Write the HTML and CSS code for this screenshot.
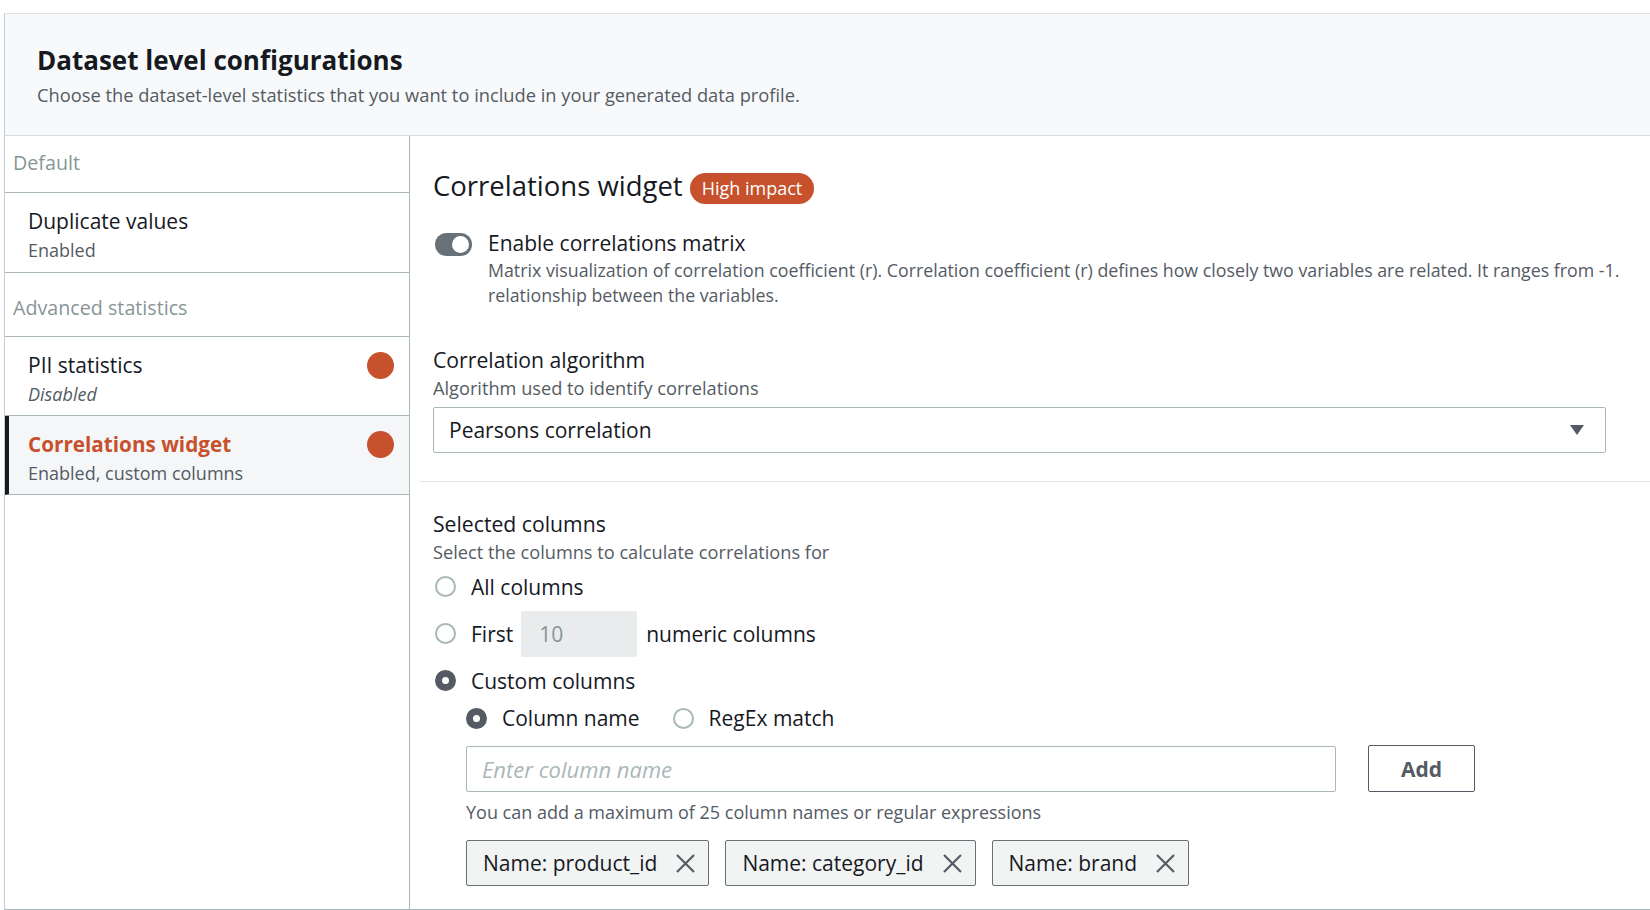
FILE: index.html
```html
<!DOCTYPE html>
<html lang="en">
<head>
<meta charset="utf-8">
<title>Dataset level configurations</title>
<link rel="stylesheet" href="styles.css">
</head>
<body>
<div class="top-strip"></div>
<div class="frame">
  <header class="header">
    <h1 class="title">Dataset level configurations</h1>
    <p class="subtitle">Choose the dataset-level statistics that you want to include in your generated data profile.</p>
  </header>
  <div class="body">
    <nav class="sidebar">
      <div class="section-label section-label--first">Default</div>
      <div class="nav-item">
        <div class="nav-text">
          <div class="nav-title">Duplicate values</div>
          <div class="nav-sub">Enabled</div>
        </div>
      </div>
      <div class="section-label section-label--second">Advanced statistics</div>
      <div class="nav-item">
        <div class="nav-text">
          <div class="nav-title">PII statistics</div>
          <div class="nav-sub nav-sub--italic">Disabled</div>
        </div>
        <span class="dot"></span>
      </div>
      <div class="nav-item nav-item--active">
        <div class="nav-text">
          <div class="nav-title nav-title--active">Correlations widget</div>
          <div class="nav-sub">Enabled, custom columns</div>
        </div>
        <span class="dot"></span>
      </div>
    </nav>
    <main class="panel">
      <div class="panel-heading">
        <h2 class="panel-title">Correlations widget</h2>
        <span class="badge">High impact</span>
      </div>

      <div class="toggle-row">
        <span class="toggle"><span class="toggle-knob"></span></span>
        <div class="toggle-text">
          <div class="toggle-label">Enable correlations matrix</div>
          <div class="toggle-desc">
            <span class="desc-line">Matrix visualization of correlation coefficient (r). Correlation coefficient (r) defines how closely two variables are related. It ranges from -1.</span>
            <span class="desc-line">relationship between the variables.</span>
          </div>
        </div>
      </div>

      <div class="field field--algo">
        <div class="field-label">Correlation algorithm</div>
        <div class="field-help">Algorithm used to identify correlations</div>
        <div class="select">
          <span class="select-value">Pearsons correlation</span>
          <svg class="select-caret" width="16" height="12" viewBox="0 0 16 12"><path d="M1 1h14L8 11z" fill="#545b64"/></svg>
        </div>
      </div>

      <div class="divider"></div>

      <div class="field field--columns">
        <div class="field-label">Selected columns</div>
        <div class="field-help">Select the columns to calculate correlations for</div>
        <div class="radio-group">
          <div class="radio-row">
            <span class="radio"></span>
            <span class="radio-label">All columns</span>
          </div>
          <div class="radio-row">
            <span class="radio"></span>
            <span class="radio-label">First</span>
            <span class="num-input">10</span>
            <span class="radio-label">numeric columns</span>
          </div>
          <div class="radio-row">
            <span class="radio radio--checked"></span>
            <span class="radio-label">Custom columns</span>
          </div>
          <div class="sub-radios">
            <div class="sub-radio">
              <span class="radio radio--checked"></span>
              <span class="radio-label">Column name</span>
            </div>
            <div class="sub-radio">
              <span class="radio"></span>
              <span class="radio-label">RegEx match</span>
            </div>
          </div>
        </div>

        <div class="custom-block">
          <div class="add-row">
            <div class="text-input"><span class="placeholder">Enter column name</span></div>
            <button class="add-btn">Add</button>
          </div>
          <div class="hint">You can add a maximum of 25 column names or regular expressions</div>
          <div class="tokens">
            <span class="token">Name: product_id
              <svg class="token-x" width="21" height="21" viewBox="0 0 21 21"><path d="M2 2l17 17M19 2L2 19" stroke="#545b64" stroke-width="2.2" fill="none"/></svg>
            </span>
            <span class="token">Name: category_id
              <svg class="token-x" width="21" height="21" viewBox="0 0 21 21"><path d="M2 2l17 17M19 2L2 19" stroke="#545b64" stroke-width="2.2" fill="none"/></svg>
            </span>
            <span class="token">Name: brand
              <svg class="token-x" width="21" height="21" viewBox="0 0 21 21"><path d="M2 2l17 17M19 2L2 19" stroke="#545b64" stroke-width="2.2" fill="none"/></svg>
            </span>
          </div>
        </div>
      </div>
    </main>
  </div>
</div>
</body>
</html>
```
FILE: styles.css
```css
* { box-sizing: border-box; }

html, body {
  margin: 0;
  padding: 0;
  height: 910px;
  overflow: hidden;
  background: #ffffff;
  font-family: "Open Sans", "Noto Sans", sans-serif;
  color: #16191f;
}

.top-strip {
  height: 13px;
}

.frame {
  margin-left: 4px;
  height: 897px;
  border-top: 1px solid #dde2e6;
  border-left: 1px solid #c6ccd1;
  border-bottom: 1px solid #aab7b8;
  display: flex;
  flex-direction: column;
}

.header {
  height: 122px;
  flex: none;
  background: #f8f9fa;
  border-bottom: 1px solid #d5dbdb;
  padding: 30px 0 0 32px;
}

.title {
  margin: 0;
  font-size: 26px;
  line-height: 32px;
  font-weight: 700;
  color: #16191f;
}

.subtitle {
  margin: 7px 0 0;
  font-size: 18.3px;
  line-height: 24px;
  color: #545b64;
}

.body {
  flex: 1;
  display: flex;
  min-height: 0;
}

/* Sidebar */
.sidebar {
  width: 405px;
  flex: none;
  border-right: 1px solid #aab7b8;
}

.section-label {
  font-size: 19.7px;
  line-height: 24px;
  color: #879596;
  padding-left: 8px;
  border-bottom: 1px solid #aab7b8;
}

.section-label--first {
  height: 57px;
  padding-top: 15px;
}

.section-label--second {
  height: 64px;
  padding-top: 23px;
}

.nav-item {
  display: flex;
  align-items: flex-start;
  justify-content: space-between;
  padding: 15px 15px 0 23px;
  border-bottom: 1px solid #aab7b8;
  height: 79px;
}

.nav-item:nth-child(2) {
  height: 80px;
}

.nav-item--active {
  background: #f4f6f8;
  border-left: 4px solid #16191f;
  padding-left: 19px;
}

.nav-title {
  font-size: 21px;
  line-height: 26px;
  color: #16191f;
}

.nav-title--active {
  color: #c6512c;
  font-weight: 700;
  font-size: 20.7px;
}

.nav-sub {
  margin-top: 4px;
  font-size: 18px;
  line-height: 24px;
  color: #545b64;
}

.nav-sub--italic {
  font-style: italic;
}

.dot {
  width: 27px;
  height: 27px;
  border-radius: 50%;
  background: #c6512c;
  flex: none;
}

/* Panel */
.panel {
  flex: 1;
  min-width: 0;
  overflow: hidden;
  padding: 32px 0 0 23px;
}

.panel-heading {
  display: flex;
  align-items: center;
  height: 36px;
  gap: 7px;
}

.panel-title {
  margin: 0;
  font-size: 27.5px;
  line-height: 34px;
  font-weight: 400;
  color: #16191f;
}

.badge {
  display: inline-block;
  height: 31px;
  line-height: 31px;
  padding: 0 12px;
  border-radius: 16px;
  background: #c6512c;
  color: #ffffff;
  font-size: 18px;
  margin-top: 4px;
}

.toggle-row {
  display: flex;
  align-items: flex-start;
  margin-top: 26px;
  gap: 16px;
  padding-left: 2px;
}

.toggle {
  width: 37px;
  height: 23px;
  border-radius: 12px;
  background: #687078;
  margin-top: 3px;
  flex: none;
  display: flex;
  align-items: center;
  justify-content: flex-end;
  padding-right: 3px;
}

.toggle-knob {
  width: 17px;
  height: 17px;
  border-radius: 50%;
  background: #ffffff;
}

.toggle-text {
  min-width: 0;
}

.toggle-label {
  font-size: 21px;
  line-height: 27px;
  color: #16191f;
}

.toggle-desc {
  margin-top: 1px;
  font-size: 17.8px;
  line-height: 25px;
  color: #545b64;
}

.desc-line {
  display: block;
  white-space: nowrap;
}

.field-label {
  font-size: 21.2px;
  line-height: 26px;
  color: #16191f;
}

.field-help {
  margin-top: 4px;
  font-size: 18.2px;
  line-height: 22px;
  color: #545b64;
}

.field--algo {
  margin-top: 39px;
}

.select {
  margin-top: 8px;
  width: 1173px;
  height: 46px;
  border: 1px solid #aab7b8;
  border-radius: 2px;
  display: flex;
  align-items: center;
  justify-content: space-between;
  padding: 0 20px 0 15px;
}

.select-value {
  font-size: 21px;
  color: #16191f;
}

.divider {
  height: 1px;
  background: #e1e5e8;
  margin: 28px 0 0 -13px;
}

.field--columns {
  padding-top: 29px;
}

.radio-group {
  display: flex;
  flex-direction: column;
}

.radio-row {
  display: flex;
  align-items: center;
  height: 47px;
  padding-left: 2px;
}

.radio {
  width: 21px;
  height: 21px;
  border-radius: 50%;
  border: 2px solid #aab7b8;
  background: #ffffff;
  flex: none;
  margin-right: 15px;
}

.radio--checked {
  border: 7px solid #545b64;
}

.radio-label {
  font-size: 21px;
  color: #16191f;
}

.num-input {
  width: 116px;
  height: 46px;
  margin: 0 9px 0 8px;
  background: #e9ebed;
  border-radius: 2px;
  display: flex;
  align-items: center;
  padding-left: 18px;
  font-size: 21px;
  color: #879596;
}

.sub-radios {
  display: flex;
  align-items: center;
  height: 28px;
  padding-left: 33px;
  gap: 33px;
}

.sub-radio {
  display: flex;
  align-items: center;
}

.custom-block {
  padding-left: 33px;
}

.add-row {
  display: flex;
  align-items: center;
  gap: 32px;
  margin-top: 13px;
}

.text-input {
  width: 870px;
  height: 46px;
  border: 1px solid #aab7b8;
  border-radius: 2px;
  display: flex;
  align-items: center;
  padding-left: 15px;
}

.placeholder {
  font-size: 22px;
  font-style: italic;
  color: #aab7b8;
}

.add-btn {
  width: 107px;
  height: 47px;
  background: #ffffff;
  border: 1px solid #545b64;
  border-radius: 2px;
  font-family: inherit;
  font-size: 21px;
  font-weight: 700;
  color: #545b64;
}

.hint {
  margin-top: 9px;
  font-size: 18px;
  line-height: 22px;
  color: #545b64;
}

.tokens {
  display: flex;
  gap: 16px;
  margin-top: 17px;
}

.token {
  display: inline-flex;
  align-items: center;
  gap: 18px;
  height: 46px;
  padding: 0 12px 0 16px;
  background: #f2f3f3;
  border: 1px solid #687078;
  border-radius: 2px;
  font-size: 21px;
  color: #16191f;
}

.token-x {
  flex: none;
}
```
